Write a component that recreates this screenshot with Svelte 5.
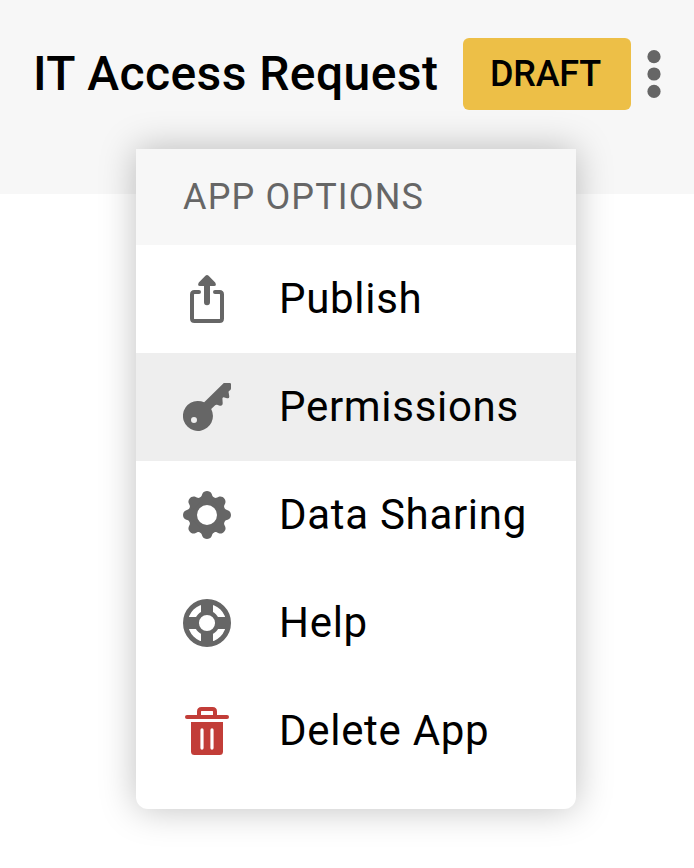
<script>
  let title = "IT Access Request";
  let status = "Draft";
  let selected = $state("permissions");

  const options = [
    { id: "publish", label: "Publish" },
    { id: "permissions", label: "Permissions" },
    { id: "sharing", label: "Data Sharing" },
    { id: "help", label: "Help" },
    { id: "delete", label: "Delete App" },
  ];

  const teeth = [0, 45, 90, 135, 180, 225, 270, 315];
</script>

<main>
  <header>
    <h1>{title}</h1>
    <span class="status">{status}</span>
    <button class="more" aria-label="App options">
      <svg width="14" height="48" viewBox="0 0 14 48">
        <circle cx="7" cy="6.7" r="6.6" />
        <circle cx="7" cy="24" r="6.6" />
        <circle cx="7" cy="41.4" r="6.6" />
      </svg>
    </button>
  </header>

  <div class="menu">
    <h2>App options</h2>
    <ul>
      {#each options as option}
        <li>
          <button
            class="option"
            class:selected={selected === option.id}
            onclick={() => (selected = option.id)}
          >
            <svg class="icon" class:danger={option.id === "delete"} viewBox="0 0 48 48">
              {#if option.id === "publish"}
                <path class="line" d="M16 17H11.5Q9 17 9 19.5V43.5Q9 46 11.5 46H36.5Q39 46 39 43.5V19.5Q39 17 36.5 17H32" />
                <path d="M22.4 .8Q24 -.7 25.6 .8L32.2 7.6Q34 11 31 11H27V27.3A3 3 0 0 1 21 27.3V11H17Q14 11 15.8 7.6Z" />
              {:else if option.id === "permissions"}
                <path fill-rule="evenodd" d="M40.8 0H46.8Q48 0 48 1.2V5.5Q48 7 46.4 7.7Q45.2 8.3 45.7 9.7L46.2 13Q46.6 15.8 44 15.2L41.4 14.4Q39.8 14 39.4 15.5L39.7 20Q39.7 23.3 36.8 22.7L34 21.8Q32.6 21.6 31.6 22.7L28.2 25.9A15 15 0 1 1 21.2 19.3ZM14 37A3 3 0 1 0 8 37A3 3 0 1 0 14 37Z" />
              {:else if option.id === "sharing"}
                <circle class="ring" cx="24" cy="24" r="14" />
                {#each teeth as angle}
                  <path
                    transform="translate(24 24) rotate({angle})"
                    d="M-7.2 -17.4C-5.2 -18.2 -5.4 -19.4 -4.6 -21.2C-3.1 -24.9 3.1 -24.9 4.6 -21.2C5.4 -19.4 5.2 -18.2 7.2 -17.4L6 -14H-6Z"
                  />
                {/each}
              {:else if option.id === "help"}
                <circle class="rim" cx="24" cy="24" r="21.5" />
                <circle class="hub" cx="24" cy="24" r="10.3" />
                <path d="M18 2H30V15.5H18ZM18 32.5H30V46H18ZM2 18H15.5V30H2ZM32.5 18H46V30H32.5Z" />
              {:else}
                <path class="line" d="M16 9V4.5Q16 2 18.5 2H29.5Q32 2 32 4.5V9" />
                <rect x="2" y="8" width="44" height="4" rx="2" />
                <path fill-rule="evenodd" d="M8 15H40V44.5Q40 48 36.5 48H11.5Q8 48 8 44.5ZM17.4 22.9V41.1Q17.4 42.7 19 42.7T20.6 41.1V22.9Q20.6 21.3 19 21.3T17.4 22.9ZM27.4 22.9V41.1Q27.4 42.7 29 42.7T30.6 41.1V22.9Q30.6 21.3 29 21.3T27.4 22.9Z" />
              {/if}
            </svg>
            <span class="label">{option.label}</span>
          </button>
        </li>
      {/each}
    </ul>
  </div>
</main>

<style>
  :global(body) {
    background: #fff;
    font-family: Roboto, sans-serif;
  }

  main {
    position: relative;
    min-height: 868px;
    overflow: hidden;
  }

  header {
    display: flex;
    align-items: flex-start;
    box-sizing: border-box;
    height: 194px;
    padding: 38px 33px 0;
    background: #f7f7f7;
  }

  h1 {
    width: 430px;
    margin: 0;
    font-size: 48px;
    font-weight: 500;
    line-height: 72px;
    letter-spacing: 0.42px;
    white-space: nowrap;
  }

  .status {
    flex: none;
    box-sizing: border-box;
    width: 168px;
    height: 72px;
    padding-right: 3px;
    border-radius: 6px;
    background: #edbf47;
    font-size: 36px;
    font-weight: 500;
    line-height: 72px;
    letter-spacing: -0.2px;
    text-align: center;
    text-transform: uppercase;
  }

  button {
    border: 0;
    padding: 0;
    background: none;
    font: inherit;
    color: #000;
    cursor: pointer;
  }

  .more {
    display: flex;
    flex: none;
    align-items: center;
    height: 72px;
    margin-left: 16px;
    fill: #666;
  }

  .menu {
    position: absolute;
    top: 149px;
    left: 136px;
    width: 440px;
    padding-bottom: 24px;
    box-sizing: border-box;
    border-radius: 0 0 12px 12px;
    background: #fff;
    box-shadow: 0 0 36px rgba(0, 0, 0, 0.25);
  }

  h2 {
    margin: 0;
    padding-left: 47px;
    background: #f7f7f7;
    color: #666;
    font-size: 36px;
    font-weight: 400;
    line-height: 96px;
    letter-spacing: 1.15px;
    text-transform: uppercase;
  }

  ul {
    margin: 0;
    padding: 0;
    list-style: none;
  }

  .option {
    display: flex;
    align-items: center;
    gap: 48px;
    width: 100%;
    height: 108px;
    padding: 0 47px;
    font-size: 42px;
    letter-spacing: 0.7px;
    white-space: nowrap;
  }

  .selected {
    background: #eee;
  }

  .label {
    padding-bottom: 2px;
  }

  .icon {
    flex: none;
    width: 48px;
    height: 48px;
    fill: #666;
    stroke: none;
    --tint: #666;
  }

  .danger {
    fill: #c23d38;
    --tint: #c23d38;
  }

  .line {
    fill: none;
    stroke: var(--tint);
    stroke-width: 4;
    stroke-linecap: round;
  }

  .ring,
  .rim,
  .hub {
    fill: none;
    stroke: var(--tint);
  }

  .ring {
    stroke-width: 8;
  }

  .rim {
    stroke-width: 5;
  }

  .hub {
    stroke-width: 4.5;
  }
</style>
